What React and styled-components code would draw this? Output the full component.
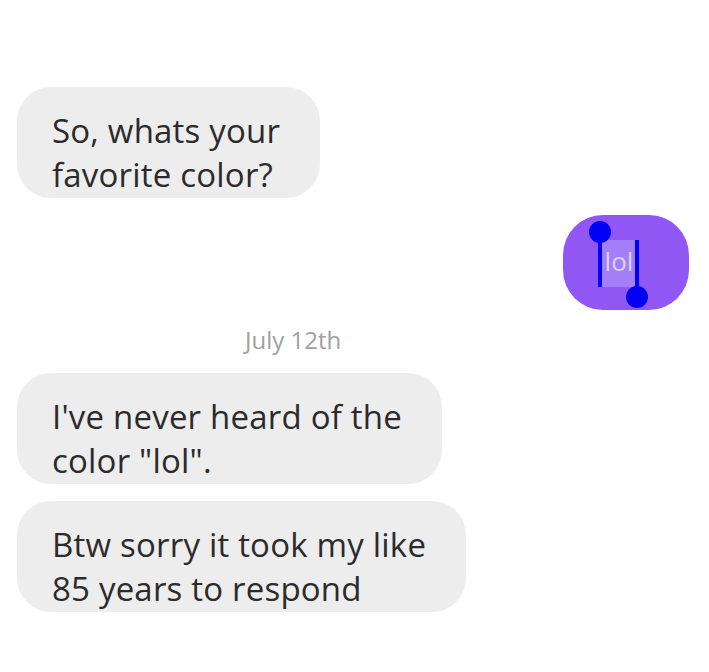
import React from 'react';
import styled, { createGlobalStyle } from 'styled-components';

const GlobalStyle = createGlobalStyle`
  html, body {
    margin: 0;
    padding: 0;
    background: #ffffff;
  }
  body {
    font-family: 'Open Sans', 'Liberation Sans', sans-serif;
    -webkit-font-smoothing: antialiased;
  }
`;

const Thread = styled.div`
  width: 709px;
  height: 672px;
  box-sizing: border-box;
  padding: 87px 20px 0 17px;
  display: flex;
  flex-direction: column;
  overflow: hidden;
`;

const Bubble = styled.div`
  align-self: flex-start;
  background: #ededed;
  color: #2b2b2b;
  border-radius: 34px;
  padding: 22px 40px 1px 35px;
  margin-top: ${(p) => p.$gap || 0}px;
  font-size: 33px;
  letter-spacing: 0.2px;
  line-height: 44px;
  white-space: nowrap;
`;

const SentBubble = styled.div`
  align-self: flex-end;
  margin-top: 17px;
  background: #9157f4;
  border-radius: 40px;
  padding: 25px 53px 23px 39px;
  line-height: 0;
`;

const DateLabel = styled.div`
  margin: 13px 0 17px;
  padding-left: 228px;
  font-size: 24px;
  line-height: 33px;
  color: #a0a0a0;
`;

const Selection = styled.span`
  position: relative;
  display: inline-block;
  width: 34px;
  height: 47px;
  background: #a27ef8;
  color: #dcd2fb;
  font-size: 26px;
  line-height: 42px;
  text-align: center;
`;

const HandleBar = styled.span`
  position: absolute;
  width: 4px;
  background: #0000f5;
  ${(p) =>
    p.$end
      ? 'right: -3px; top: 0; height: 56px;'
      : 'left: -4px; top: 2px; height: 45px;'}
`;

const HandleKnob = styled.span`
  position: absolute;
  width: 22px;
  height: 22px;
  border-radius: 50%;
  background: #0000f5;
  ${(p) => (p.$end ? 'right: -12px; bottom: -21px;' : 'left: -13px; top: -19px;')}
`;

const Line = styled.div``;

const App = () => {
  return (
    <>
      <GlobalStyle />
      <Thread>
        <Bubble>
          <Line>So, whats your</Line>
          <Line>favorite color?</Line>
        </Bubble>
        <SentBubble>
          <Selection>
            lol
            <HandleBar />
            <HandleKnob />
            <HandleBar $end />
            <HandleKnob $end />
          </Selection>
        </SentBubble>
        <DateLabel>July 12th</DateLabel>
        <Bubble>
          <Line>I've never heard of the</Line>
          <Line>color "lol".</Line>
        </Bubble>
        <Bubble $gap={17}>
          <Line>Btw sorry it took my like</Line>
          <Line>85 years to respond</Line>
        </Bubble>
      </Thread>
    </>
  );
};

export default App;
